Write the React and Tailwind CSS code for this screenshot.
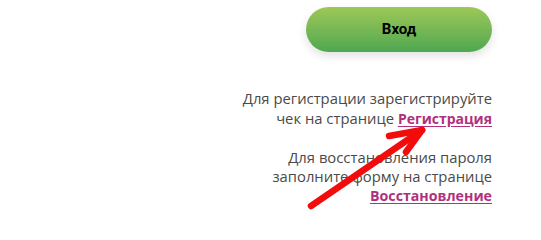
import React from 'react';

function Arrow() {
  return (
    <svg className="absolute left-0 top-0 pointer-events-none" width="541" height="230" viewBox="0 0 541 230">
      <g stroke="#f20c0c" strokeWidth="6.5" strokeLinecap="round" strokeLinejoin="round" fill="none">
        <line x1="311" y1="206" x2="422" y2="130" />
        <line x1="422" y1="130" x2="389" y2="136" />
        <line x1="422" y1="130" x2="406" y2="152" />
      </g>
    </svg>
  );
}

export default function App() {
  return (
    <div className="relative w-[541px] h-[230px] bg-white overflow-hidden font-['Open_Sans',sans-serif]">
      <div className="flex flex-col items-end pr-[49px] pt-[7px]">
        <button
          type="button"
          className="w-[186px] h-[45px] rounded-full bg-gradient-to-b from-[#9cc857] to-[#4ea752] shadow-[0_4px_10px_rgba(0,0,0,0.12)] text-[15px] font-bold text-black font-['Roboto',sans-serif]"
        >
          Вход
        </button>

        <p className="mt-[36px] text-right text-[14.8px] leading-[20px] text-[#4a4a4a]">
          Для регистрации зарегистрируйте
          <br />
          чек на странице{' '}
          <a href="#" className="text-[14px] font-bold text-[#b0307e] underline underline-offset-2">Регистрация</a>
        </p>

        <p className="mt-[19px] text-right text-[14.8px] leading-[19px] text-[#4a4a4a]">
          Для восстановления пароля
          <br />
          заполните форму на странице
          <br />
          <a href="#" className="text-[14.2px] font-bold text-[#b0307e] underline underline-offset-2">Восстановление</a>
        </p>
      </div>
      <Arrow />
    </div>
  );
}
